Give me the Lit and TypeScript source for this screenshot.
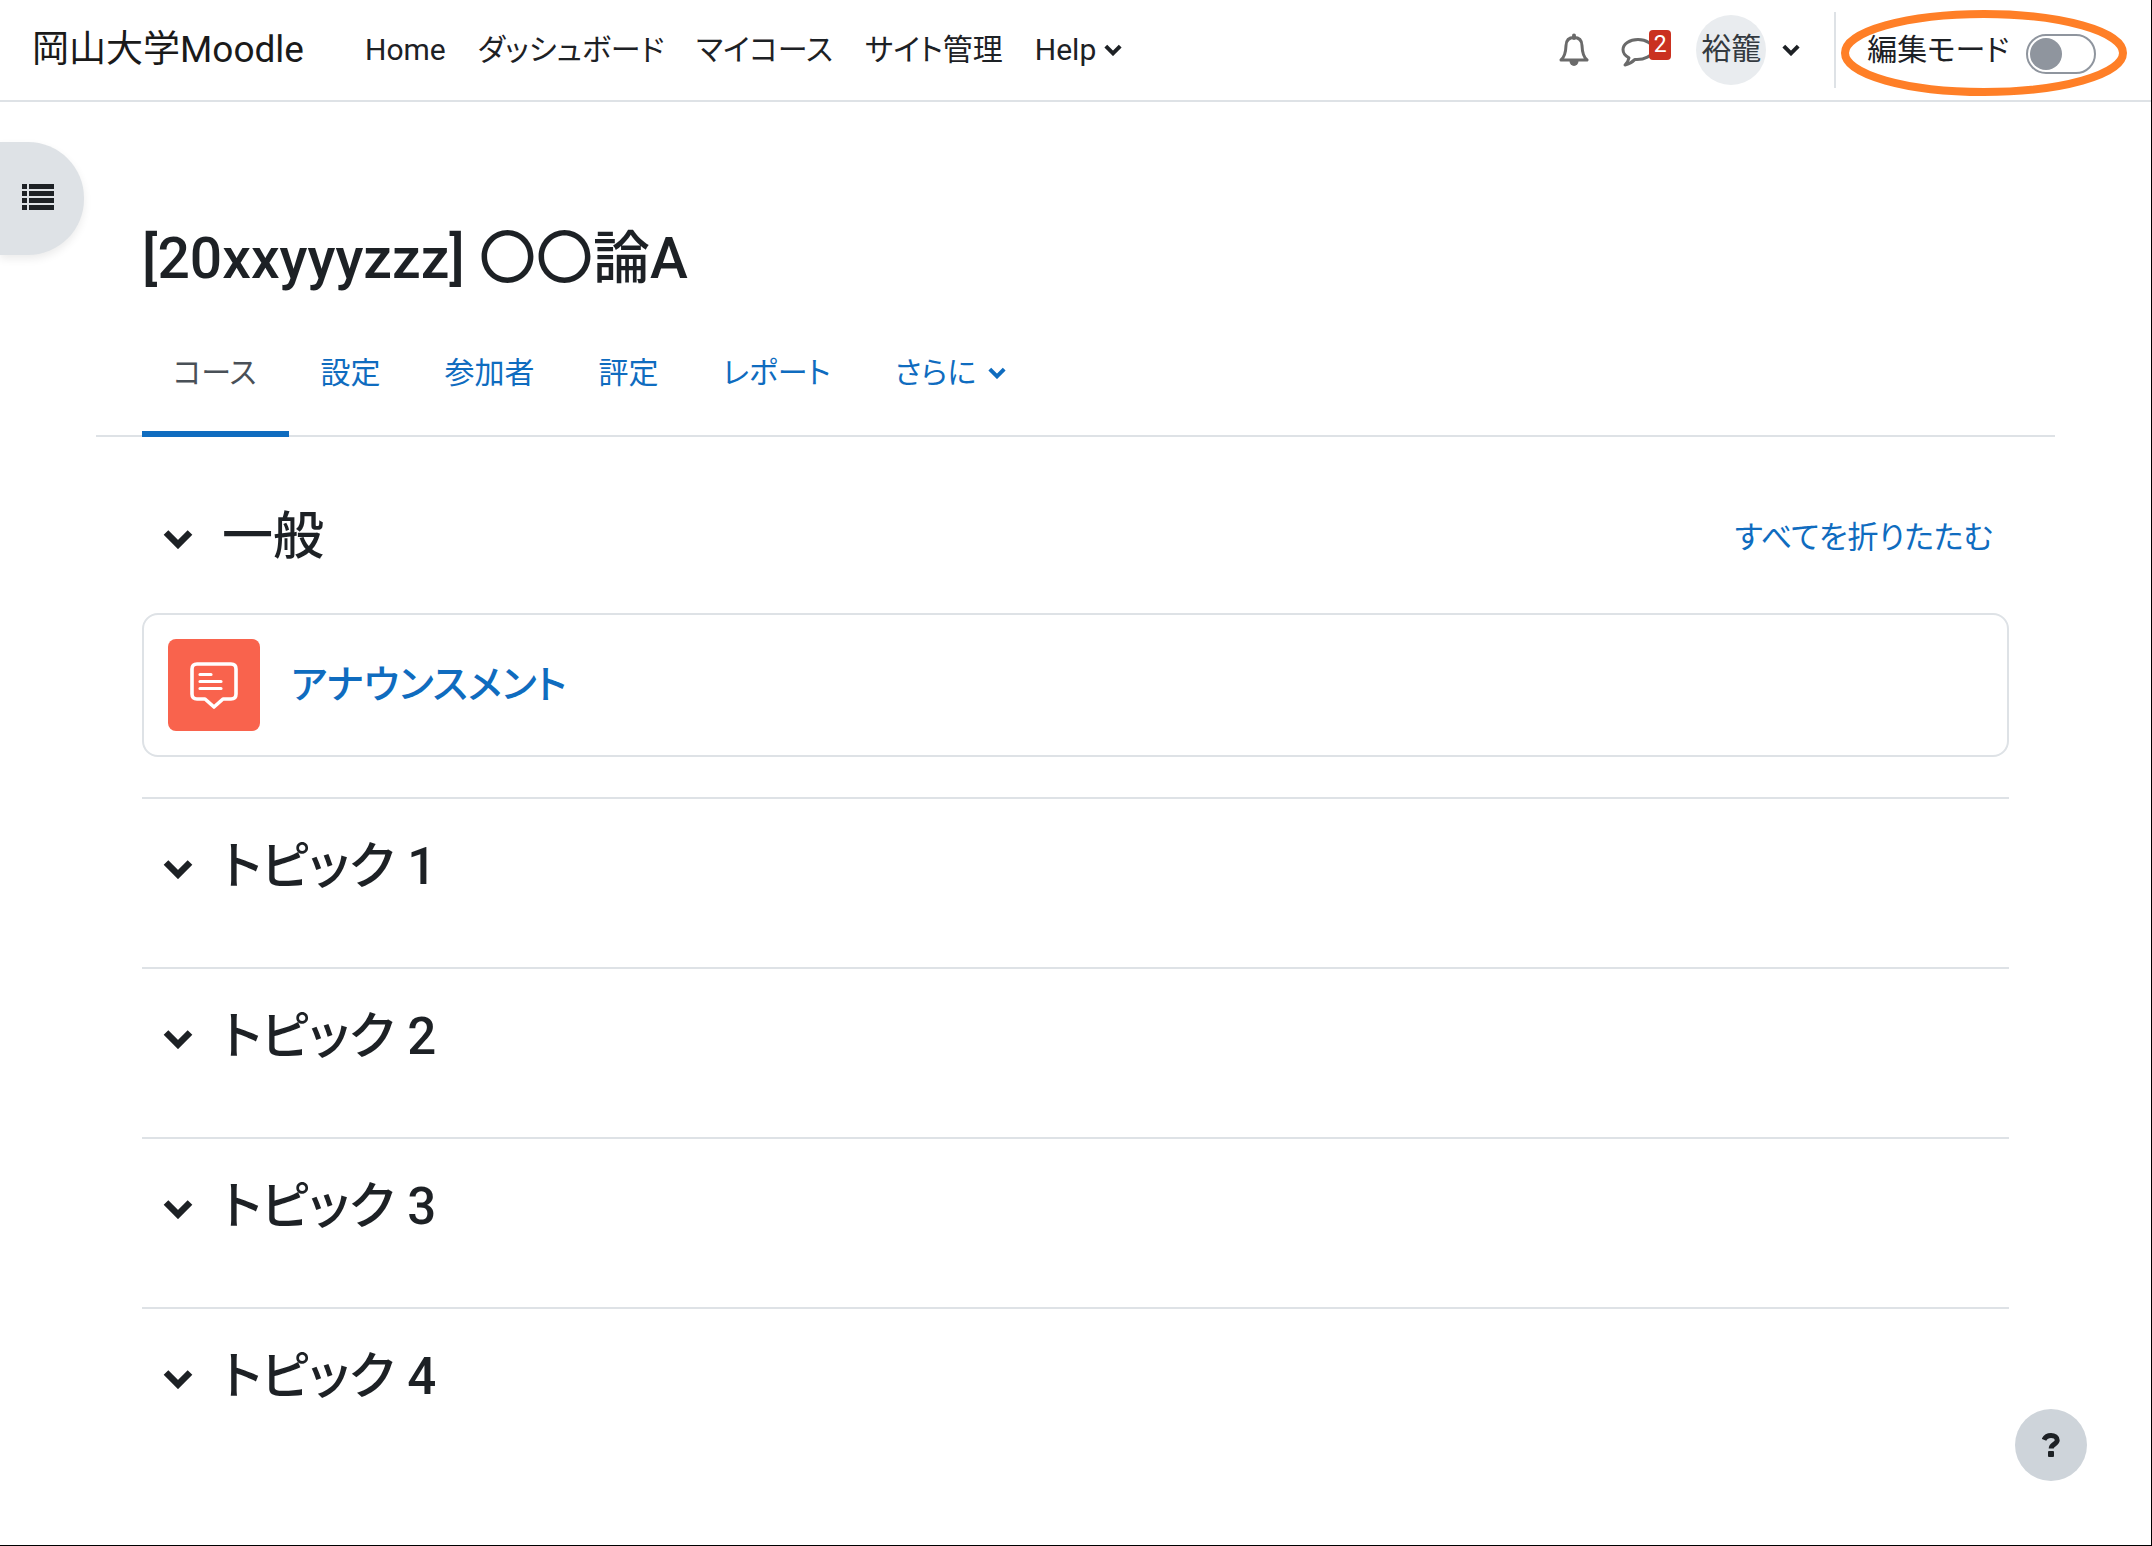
import { LitElement, html, css, svg } from "lit";
import { customElement, state } from "lit/decorators.js";

const chevron = (cls: string) => html`<svg class=${cls} viewBox="0 0 30 20" aria-hidden="true">
  <path d="M3 3.500 15 15.500 27 3.500" fill="none" stroke="currentColor" stroke-width="6.600" />
</svg>`;

const listRows = [0, 7, 14, 21];

@customElement("app-root")
export class AppRoot extends LitElement {
  @state() private editing = false;

  private topics = ["トピック 1", "トピック 2", "トピック 3", "トピック 4"];
  private navLinks = ["Home", "ダッシュボード", "マイコース", "サイト管理"];
  private tabs = ["コース", "設定", "参加者", "評定", "レポート"];

  static styles = css`
    :host {
      display: block;
      position: relative;
      box-sizing: border-box;
      min-height: 100vh;
      border-right: 1px solid #000;
      border-bottom: 1px solid #000;
      background: #fff;
      color: #1d2125;
      font-family: Roboto, "Noto Sans CJK JP", sans-serif;
      font-size: 30px;
      line-height: 44px;
      font-feature-settings: "palt";
    }
    * { box-sizing: border-box; }
    a { color: inherit; text-decoration: none; }
    button {
      padding: 0;
      border: 0;
      background: none;
      color: inherit;
      font: inherit;
      font-feature-settings: inherit;
      cursor: pointer;
    }
    h1, h2 { margin: 0; }
    svg { display: block; flex: none; }

    .header {
      display: flex;
      align-items: center;
      height: 102px;
      padding: 0 55px 0 32px;
      border-bottom: 2px solid #dee2e6;
      white-space: nowrap;
    }
    .brand { margin-right: 61px; font-size: 37px; color: #1a1a1a; }
    .nav { display: flex; gap: 32px; }
    .menu { display: flex; align-items: center; gap: 8px; }
    .chev-sm { width: 18px; height: 12px; }
    .tools { display: flex; align-items: center; margin-left: auto; color: #1d2125; }
    .icon-btn { position: relative; width: 30px; height: 36px; color: #6a6a6a; }
    .chat { margin-left: 32px; }
    .badge {
      position: absolute;
      left: 28px;
      top: -2px;
      width: 22px;
      height: 30px;
      border-radius: 4px;
      background: #ca3120;
      color: #fff;
      font-size: 23px;
      line-height: 30px;
      text-align: center;
    }
    .user { display: flex; align-items: center; gap: 16px; margin-left: 45px; }
    .avatar {
      width: 70px;
      height: 70px;
      border-radius: 50%;
      background: #e9ecef;
      color: #343a40;
      line-height: 68px;
      text-align: center;
    }
    .edit {
      position: relative;
      display: flex;
      align-items: center;
      gap: 17px;
      height: 76px;
      margin-left: 34px;
      padding-left: 31px;
      border-left: 2px solid #dee2e6;
    }
    .switch {
      appearance: none;
      width: 70px;
      height: 40px;
      margin: 8px 0 0;
      padding: 2px;
      border: 2px solid #8f959e;
      border-radius: 20px;
      background: #fff;
    }
    .switch::before {
      content: "";
      display: block;
      width: 32px;
      height: 32px;
      border-radius: 50%;
      background: #8f959e;
    }
    .switch:checked::before { margin-left: auto; }
    .ring {
      position: absolute;
      left: 5px;
      top: -2px;
      width: 286px;
      height: 86px;
      pointer-events: none;
    }

    .drawer {
      position: absolute;
      left: 0;
      top: 142px;
      display: flex;
      align-items: center;
      width: 84px;
      height: 113px;
      padding: 0 0 4px 22px;
      border-radius: 0 56px 56px 0;
      background: #dee2e6;
      box-shadow: 0 4px 8px rgba(0, 0, 0, 0.08);
    }
    .list-icon { width: 32px; height: 28px; }

    .main { padding: 117px 96px 0; }
    .title {
      padding: 0 46px;
      font-size: 57px;
      line-height: 80px;
      font-weight: 500;
    }
    .tabs {
      display: flex;
      gap: 1px;
      margin-top: 27px;
      padding: 0 46px;
      border-bottom: 2px solid #dee2e6;
      color: #0f6cbf;
      white-space: nowrap;
    }
    .tab {
      display: flex;
      align-items: center;
      gap: 12px;
      height: 111px;
      margin-bottom: -2px;
      padding: 0 32px 12px 31px;
      border-bottom: 6px solid transparent;
    }
    .tab.active { border-color: #0f6cbf; color: #495057; }

    .sections { padding: 0 46px; }
    .section { min-height: 170px; border-bottom: 2px solid #dee2e6; }
    .section:last-child { border-bottom: 0; }
    .section-head {
      display: flex;
      align-items: center;
      height: 136px;
      padding: 0 16px 0 20px;
    }
    .first .section-head { height: 176px; padding-top: 24px; }
    .section-head button { display: flex; margin-right: 28px; padding-top: 4px; }
    .chev-lg { width: 32px; height: 20px; }
    .name { font-size: 51px; line-height: 60px; font-weight: 500; }
    .collapse { margin-left: auto; padding-top: 2px; color: #0f6cbf; font-size: 31px; }
    .card {
      display: flex;
      align-items: center;
      gap: 31px;
      margin-bottom: 40px;
      padding: 24px;
      border: 2px solid #dee2e6;
      border-radius: 16px;
      color: #0f6cbf;
      font-size: 39px;
      font-weight: 500;
    }
    .forum { display: grid; place-items: center; width: 92px; height: 92px; border-radius: 8px; background: #f9634d; }
    .forum svg { width: 48px; height: 48px; }

    .help {
      position: fixed;
      right: 65px;
      bottom: 65px;
      display: grid;
      place-items: center;
      width: 72px;
      height: 72px;
      border-radius: 50%;
      background: #ced4da;
    }
    .help svg { width: 18px; height: 24px; }
  `;

  private header() {
    return html`<header class="header">
      <a class="brand" href="#">岡山大学Moodle</a>
      <nav class="nav">
        ${this.navLinks.map((t) => html`<a href="#">${t}</a>`)}
        <button class="menu">Help ${chevron("chev-sm")}</button>
      </nav>
      <div class="tools">
        <button class="icon-btn" aria-label="通知">
          <svg width="30" height="36" viewBox="0 0 30 36" fill="none" stroke="currentColor" stroke-width="3" stroke-linejoin="round">
            <path d="M2 28C5.500 25 6.800 20 7 13.500C7.200 8 10 5.500 15 5.500S22.800 8 23 13.500C23.200 20 24.500 25 28 28Z" />
            <path d="M15 3.500V6" stroke-width="4" stroke-linecap="round" />
            <path d="M10.500 29H19.500A4.500 5 0 0 1 10.500 29Z" fill="currentColor" stroke="none" />
          </svg>
        </button>
        <button class="icon-btn chat" aria-label="メッセージ 2">
          <svg width="34" height="36" viewBox="0 0 34 36" fill="none" stroke="currentColor" stroke-width="3" stroke-linejoin="round">
            <path d="M17 7.500C8.500 7.500 2 12 2 17.500C2 21 4.500 24 8 25.800C7.500 29 6 31 4 33C8.500 32 11.500 30 14 27.400C23 28 32 24 32 17.500C32 12 25.500 7.500 17 7.500Z" />
          </svg>
          <span class="badge">2</span>
        </button>
        <button class="user" aria-label="ユーザメニュー">
          <span class="avatar">裕籠</span>${chevron("chev-sm")}
        </button>
        <div class="edit">
          <label for="edit-mode">編集モード</label>
          <input
            id="edit-mode"
            class="switch"
            type="checkbox"
            .checked=${this.editing}
            @change=${() => (this.editing = !this.editing)}
          />
          <svg class="ring" viewBox="0 0 286 86" aria-hidden="true">
            <ellipse cx="143" cy="43" rx="139" ry="39" fill="none" stroke="#ff7f27" stroke-width="8" />
          </svg>
        </div>
      </div>
    </header>`;
  }

  private section(name: string) {
    return html`<section class="section">
      <div class="section-head">
        <button aria-label=${name}>${chevron("chev-lg")}</button>
        <h2 class="name">${name}</h2>
      </div>
    </section>`;
  }

  render() {
    return html`
      ${this.header()}
      <button class="drawer" aria-label="コースインデックス">
        <svg class="list-icon" viewBox="0 0 32 28" fill="currentColor">
          ${listRows.map((y) => svg`<rect x="0" y=${y + 1} width="5" height="5" /><rect x="7" y=${y + 1} width="25" height="5" />`)}
        </svg>
      </button>
      <main class="main">
        <h1 class="title">[20xxyyyzzz] 〇〇論A</h1>
        <nav class="tabs">
          ${this.tabs.map((t, i) => html`<a class="tab ${i === 0 ? "active" : ""}" href="#">${t}</a>`)}
          <button class="tab">さらに ${chevron("chev-sm")}</button>
        </nav>
        <div class="sections">
          <section class="section first">
            <div class="section-head">
              <button aria-label="一般">${chevron("chev-lg")}</button>
              <h2 class="name">一般</h2>
              <a class="collapse" href="#">すべてを折りたたむ</a>
            </div>
            <div class="card">
              <span class="forum">
                <svg viewBox="0 0 48 48" fill="none" stroke="#fff" stroke-width="3.600" stroke-linejoin="round" stroke-linecap="round">
                  <path d="M7 3H41Q46 3 46 8V33Q46 38 41 38H33L24 46 15 38H7Q2 38 2 33V8Q2 3 7 3Z" />
                  <path d="M10 13.500H21M10 20.500H31M10 27.500H31" stroke-width="3.200" />
                </svg>
              </span>
              <a href="#">アナウンスメント</a>
            </div>
          </section>
          ${this.topics.map((t) => this.section(t))}
        </div>
      </main>
      <button class="help" aria-label="ヘルプ">
        <svg viewBox="0 0 18 24">
          <path d="M2 6.800C3.500 3.500 6 2.500 9 2.500C12.500 2.500 15.200 4.500 15.200 7.300C15.200 11.200 9.200 11 9.200 15.500" fill="none" stroke="currentColor" stroke-width="5" />
          <rect x="6" y="18" width="6" height="6" rx="1" fill="currentColor" />
        </svg>
      </button>
    `;
  }
}
